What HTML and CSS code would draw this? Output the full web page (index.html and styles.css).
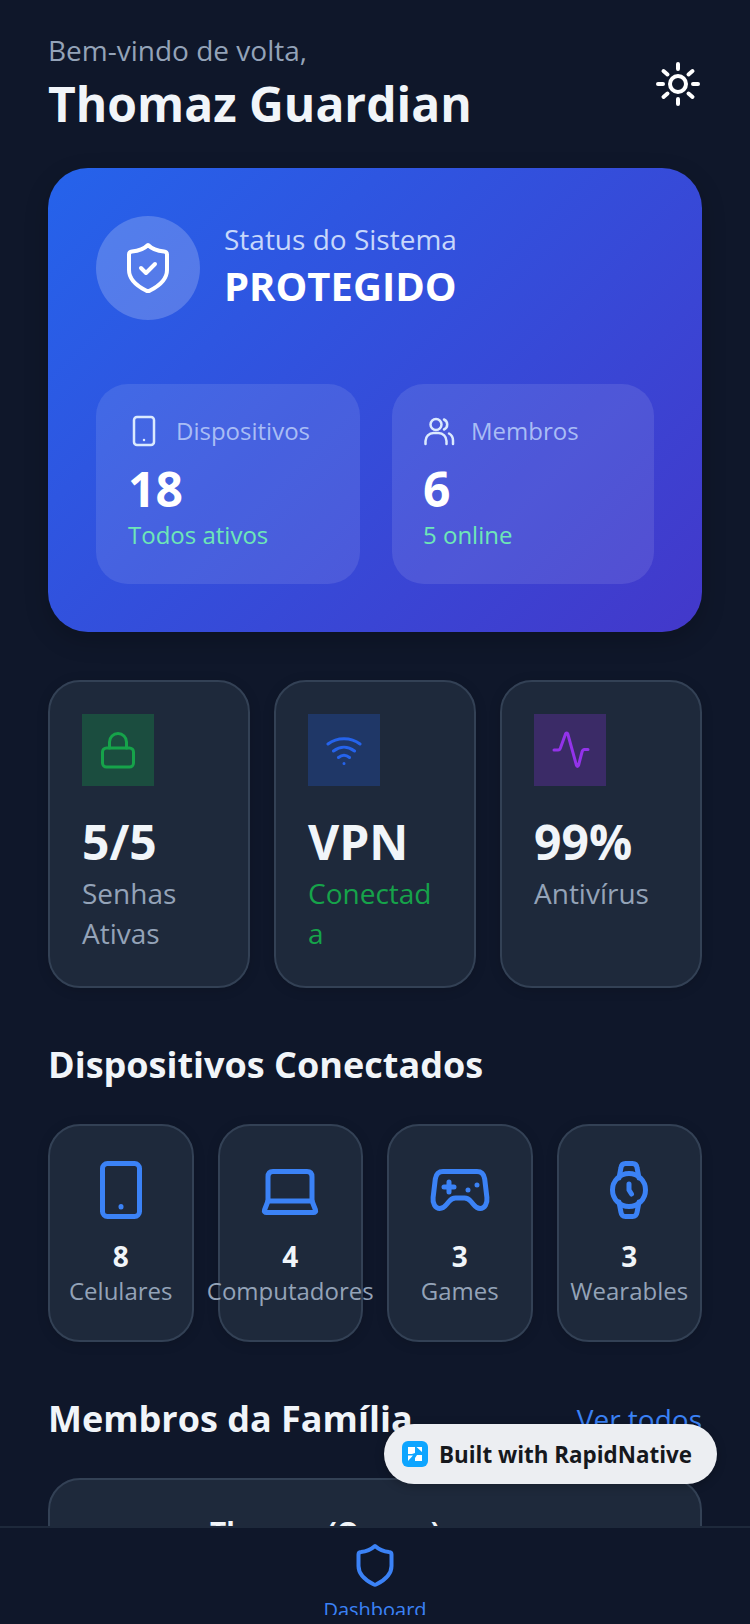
FILE: index.html

```html
<!DOCTYPE html>
<html lang="pt-BR">
<head>
  <meta charset="UTF-8">
  <meta name="viewport" content="width=device-width, initial-scale=1.0">
  <title>Thomaz Guardian - Dashboard</title>
  <link rel="stylesheet" href="styles.css">
</head>
<body>
  <div class="app">
    <main class="content">
      <header class="header">
        <div>
          <p class="greeting">Bem-vindo de volta,</p>
          <h1 class="user-name">Thomaz Guardian</h1>
        </div>
        <svg class="icon-sun" viewBox="0 0 48 48" fill="none" stroke="#fff" stroke-width="4" stroke-linecap="round">
          <circle cx="24" cy="24" r="8"/>
          <path d="M24 4v5M24 39v5M4 24h5M39 24h5M9.500 11l4 3.500M34.500 33.500l4 3.500M38.500 11l-4 3.500M13.500 33.500l-4 3.500"/>
        </svg>
      </header>

      <section class="hero">
        <div class="hero-top">
          <div class="hero-icon">
            <svg width="56" height="56" viewBox="0 0 56 56" fill="none" stroke="#fff" stroke-width="4" stroke-linecap="round" stroke-linejoin="round">
              <path d="M28 5c4 4 10 6 16 6.500 2 .2 3 1.300 3 3V30c0 10-8 16-17 20.500a4 4 0 0 1-4 0C17 46 9 40 9 30V14.500c0-1.700 1-2.800 3-3C18 11 24 9 28 5z"/>
              <path d="M21 28l5 5 9-9"/>
            </svg>
          </div>
          <div>
            <p class="hero-label">Status do Sistema</p>
            <p class="hero-status">PROTEGIDO</p>
          </div>
        </div>
        <div class="hero-stats">
          <div class="hero-stat">
            <div class="hero-stat-head">
              <svg width="32" height="32" viewBox="0 0 32 32" fill="none" stroke="#dbeafe" stroke-width="2.500" stroke-linecap="round" stroke-linejoin="round">
                <rect x="6" y="2" width="20" height="28" rx="3"/>
                <path d="M16 25h.01"/>
              </svg>
              <span>Dispositivos</span>
            </div>
            <p class="hero-stat-value">18</p>
            <p class="hero-stat-note">Todos ativos</p>
          </div>
          <div class="hero-stat">
            <div class="hero-stat-head">
              <svg width="32" height="32" viewBox="0 0 32 32" fill="none" stroke="#dbeafe" stroke-width="2.500" stroke-linecap="round" stroke-linejoin="round">
                <circle cx="13" cy="9.500" r="5.500"/>
                <path d="M2.500 29v-3a8 8 0 0 1 8-8h5a8 8 0 0 1 8 8v3M21 4.500a5.500 5.500 0 0 1 0 10M26 18.500a8 8 0 0 1 4 7V29"/>
              </svg>
              <span>Membros</span>
            </div>
            <p class="hero-stat-value">6</p>
            <p class="hero-stat-note">5 online</p>
          </div>
        </div>
      </section>

      <section class="stat-row">
        <div class="stat-card">
          <div class="stat-icon stat-icon-green">
            <svg width="40" height="40" viewBox="0 0 40 40" fill="none" stroke="#16a34a" stroke-width="3" stroke-linecap="round" stroke-linejoin="round">
              <rect x="4.500" y="18" width="31" height="19" rx="4"/>
              <path d="M11.500 18v-6a8.500 8.500 0 0 1 17 0v6"/>
            </svg>
          </div>
          <p class="stat-value">5/5</p>
          <p class="stat-label">Senhas Ativas</p>
        </div>
        <div class="stat-card">
          <div class="stat-icon stat-icon-blue">
            <svg width="40" height="40" viewBox="0 0 40 40" fill="none" stroke="#2563eb" stroke-width="3" stroke-linecap="round" stroke-linejoin="round">
              <path d="M4 14C13 7 27 7 36 14M9.500 21c6.500-5 14.500-5 21 0M14.500 27.500c3.500-2.800 7.500-2.800 11 0M20 33.500h.01"/>
            </svg>
          </div>
          <p class="stat-value">VPN</p>
          <p class="stat-label stat-label-green">Conectada</p>
        </div>
        <div class="stat-card">
          <div class="stat-icon stat-icon-purple">
            <svg width="40" height="40" viewBox="0 0 40 40" fill="none" stroke="#9333ea" stroke-width="3" stroke-linecap="round" stroke-linejoin="round">
              <path d="M4 20h4c1.500 0 2.300-.8 2.800-3L15.500 4c.3-1.200 2-1.200 2.300 0l8.700 31.500c.3 1.200 1.500 1.200 2 0L32 22c.4-1.500 1.300-2.500 2.500-2.500H38"/>
            </svg>
          </div>
          <p class="stat-value">99%</p>
          <p class="stat-label">Antivírus</p>
        </div>
      </section>

      <h2 class="section-title">Dispositivos Conectados</h2>
      <section class="device-row">
        <div class="device-card">
          <svg width="64" height="64" viewBox="0 0 64 64" fill="none" stroke="#3b82f6" stroke-width="5" stroke-linecap="round" stroke-linejoin="round">
            <rect x="13.500" y="5.500" width="37" height="53" rx="5"/>
            <path d="M32 48.500v.5"/>
          </svg>
          <p class="device-count">8</p>
          <p class="device-label">Celulares</p>
        </div>
        <div class="device-card">
          <svg width="64" height="64" viewBox="0 0 64 64" fill="none" stroke="#3b82f6" stroke-width="5" stroke-linecap="round" stroke-linejoin="round">
            <path d="M10 43V19c0-4 2-5.500 5-5.500h34c3 0 5 1.500 5 5.500v24"/>
            <path d="M10 43h44l3.500 9c.5 1.500-.5 2.500-2 2.500H8.500c-1.500 0-2.500-1-2-2.500z"/>
          </svg>
          <p class="device-count">4</p>
          <p class="device-label">Computadores</p>
        </div>
        <div class="device-card">
          <svg width="64" height="64" viewBox="0 0 64 64" fill="none" stroke="#3b82f6" stroke-width="5" stroke-linecap="round" stroke-linejoin="round">
            <path d="M15 13.500h34c4.500 0 7 3 7.700 7.500l2.200 18.500c.7 6-2.200 11-6.700 11-3 0-4.700-1.500-6.700-4l-2.500-3c-2-2.400-3.500-3.500-6.500-3.500h-9c-3 0-4.500 1.100-6.500 3.500l-2.500 3c-2 2.500-3.700 4-6.700 4-4.500 0-7.400-5-6.700-11L7.300 21C8 16.500 10.500 13.500 15 13.500z"/>
            <path d="M21 24v10M16 29h10M40 32v.1M49 27v.1"/>
          </svg>
          <p class="device-count">3</p>
          <p class="device-label">Games</p>
        </div>
        <div class="device-card">
          <svg width="64" height="64" viewBox="0 0 64 64" fill="none" stroke="#3b82f6" stroke-width="5" stroke-linecap="round" stroke-linejoin="round">
            <circle cx="32" cy="32" r="16.500"/>
            <path d="M22 20l2-10.500c.4-2.700 1.800-4 4.500-4h7c2.700 0 4.100 1.300 4.500 4L42 20M22 44l2 10.500c.4 2.700 1.800 4 4.500 4h7c2.700 0 4.100-1.300 4.500-4L42 44M32 26v6l2.500 4"/>
          </svg>
          <p class="device-count">3</p>
          <p class="device-label">Wearables</p>
        </div>
      </section>

      <div class="section-head">
        <h2 class="section-title">Membros da Família</h2>
        <a class="see-all">Ver todos</a>
      </div>
      <section class="member-card">
        <div class="member-avatar"></div>
        <p class="member-name">Thomaz (Owner)</p>
      </section>
    </main>

    <nav class="tabbar">
      <div class="tab">
        <svg class="tab-icon" width="48" height="48" viewBox="0 0 48 48" fill="none" stroke="#3b82f6" stroke-width="4" stroke-linejoin="round">
          <path d="M24 4c4 3.500 8.500 5.500 14 6 1.500.1 2.500 1 2.500 2.500V24c0 9-7.500 14.500-15 18.300a3.500 3.500 0 0 1-3 0C15 38.500 7.500 33 7.500 24V12.500c0-1.500 1-2.400 2.500-2.500 5.500-.5 10-2.500 14-6z"/>
        </svg>
        <span class="tab-label">Dashboard</span>
      </div>
    </nav>

    <div class="built-badge">
      <svg class="built-logo" viewBox="0 0 26 26">
        <rect width="26" height="26" rx="6" fill="#0ea5ff"/>
        <path d="M6 6h7v6l-3 1H6zM14.500 6H20v5zM6 14.500h5L6 20zM15 14h5v6h-7v-3z" fill="#fff"/>
      </svg>
      <span>Built with RapidNative</span>
    </div>
  </div>
</body>
</html>
```

FILE: styles.css

```css
* {
  box-sizing: border-box;
}
body {
  margin: 0;
  font-family: "Open Sans", sans-serif;
  background-color: #0f172a;
  color: #f1f5f9;
}
p, h1, h2 {
  margin: 0;
}
.app {
  position: relative;
  display: flex;
  flex-direction: column;
  height: 1624px;
  overflow: hidden;
}
.content {
  flex: 1;
  min-height: 0;
  overflow: hidden;
  padding: 32px 48px 0;
}

/* header */
.header {
  display: flex;
  justify-content: space-between;
  align-items: center;
  margin-bottom: 32px;
}
.greeting {
  font-size: 28px;
  line-height: 36px;
  margin-bottom: 4px;
  color: #94a3b8;
}
.user-name {
  font-size: 48px;
  line-height: 64px;
  font-weight: 700;
}
.icon-sun {
  width: 48px;
  height: 48px;
}

/* status card */
.hero {
  padding: 48px;
  border-radius: 40px;
  background: linear-gradient(135deg, #2563eb, #4338ca);
  box-shadow: 0 8px 24px rgba(0,0,0,0.2);
  margin-bottom: 48px;
}
.hero-top {
  display: flex;
  align-items: center;
  gap: 24px;
  margin-bottom: 64px;
}
.hero-icon {
  display: flex;
  align-items: center;
  justify-content: center;
  width: 104px;
  height: 104px;
  border-radius: 50%;
  background-color: rgba(255,255,255,0.2);
}
.hero-label {
  font-size: 28px;
  line-height: 42px;
  color: #c7d7fb;
}
.hero-status {
  margin-bottom: 6px;
  font-size: 40px;
  line-height: 52px;
  font-weight: 700;
  color: #fff;
}
.hero-stats {
  display: grid;
  grid-template-columns: minmax(0, 264fr) minmax(0, 262fr);
  gap: 32px;
}
.hero-stat {
  height: 200px;
  padding: 31px 32px;
  border-radius: 32px;
  background-color: rgba(255,255,255,0.1);
}
.hero-stat + .hero-stat {
  padding-left: 31px;
}
.hero-stat-head {
  display: flex;
  align-items: center;
  gap: 16px;
  font-size: 24px;
  line-height: 32px;
  color: #a9bdf5;
  margin-bottom: 14px;
}
.hero-stat-value {
  font-size: 48px;
  line-height: 56px;
  font-weight: 700;
  color: #fff;
}
.hero-stat-note {
  margin-top: 2px;
  font-size: 24px;
  line-height: 32px;
  color: #6ee7b7;
}

/* small stats */
.stat-row {
  display: grid;
  grid-template-columns: repeat(3, minmax(0, 1fr));
  gap: 24px;
  margin-bottom: 52px;
}
.stat-card {
  height: 308px;
  padding: 32px;
  border: 2px solid #334155;
  border-radius: 32px;
  background-color: #1e293b;
  box-shadow: 0 2px 12px rgba(0,0,0,0.15);
}
.stat-icon {
  display: flex;
  align-items: center;
  justify-content: center;
  width: 72px;
  height: 72px;
  margin-bottom: 24px;
}
.stat-icon-green {
  background-color: rgba(22,163,74,0.3);
}
.stat-icon-blue {
  background-color: rgba(37,99,235,0.25);
}
.stat-icon-purple {
  background-color: rgba(147,51,234,0.25);
}
.stat-value {
  font-size: 48px;
  line-height: 64px;
  font-weight: 700;
}
.stat-label {
  margin-top: -1px;
  font-size: 28px;
  line-height: 40px;
  color: #94a3b8;
  word-break: break-word;
}
.stat-label-green {
  color: #16a34a;
  word-break: break-all;
}

/* devices */
.section-title {
  font-size: 36px;
  line-height: 50px;
  font-weight: 700;
}
.device-row {
  display: grid;
  grid-template-columns: repeat(4, minmax(0, 1fr));
  gap: 24px;
  margin-top: 34px;
  margin-bottom: 52px;
}
.device-card {
  display: flex;
  flex-direction: column;
  align-items: center;
  height: 218px;
  padding: 32px 16px;
  border: 2px solid #334155;
  border-radius: 32px;
  background-color: #1e293b;
  box-shadow: 0 2px 12px rgba(0,0,0,0.15);
}
.device-count {
  margin-top: 16px;
  font-size: 28px;
  line-height: 37px;
  font-weight: 700;
}
.device-label {
  font-size: 24px;
  line-height: 32px;
  color: #94a3b8;
  white-space: nowrap;
}

/* members */
.section-head {
  display: flex;
  justify-content: space-between;
  align-items: center;
  margin-bottom: 34px;
}
.see-all {
  font-size: 28px;
  line-height: 40px;
  color: #3b82f6;
}
.member-card {
  display: flex;
  gap: 32px;
  height: 160px;
  padding: 32px;
  border: 2px solid #334155;
  border-radius: 32px;
  background-color: #1e293b;
}
.member-avatar {
  width: 96px;
  height: 96px;
}
.member-name {
  font-size: 28px;
  line-height: 40px;
  font-weight: 700;
}

/* bottom bar */
.tabbar {
  display: flex;
  justify-content: center;
  height: 98px;
  padding-top: 14px;
  border-top: 2px solid #1e293b;
  background-color: #0f172a;
}
.tab {
  display: flex;
  flex-direction: column;
  align-items: center;
  height: 73px;
  overflow: hidden;
}
.tab-icon {
  flex: none;
}
.tab-label {
  flex: none;
  margin-top: 6px;
  font-size: 20px;
  line-height: 28px;
  color: #3b82f6;
}

/* floating badge */
.built-badge {
  position: absolute;
  left: 384px;
  top: 1424px;
  display: flex;
  align-items: center;
  gap: 11px;
  width: 333px;
  height: 60px;
  padding-left: 18px;
  border-radius: 30px;
  background-color: #eceef2;
  box-shadow: 0 2px 10px rgba(0,0,0,0.25);
  font-size: 22.4px;
  font-weight: 700;
  color: #16181d;
}
.built-logo {
  width: 26px;
  height: 26px;
}
```
